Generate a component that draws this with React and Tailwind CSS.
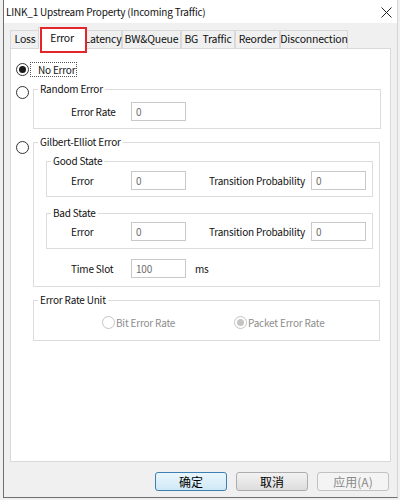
import React from 'react';

const Radio = ({ checked, disabled }) => (
    <span className={`w-[13px] h-[13px] shrink-0 rounded-full border flex items-center justify-center bg-white ${disabled ? 'border-[#c4c4c4]' : 'border-[#333333]'}`}>
        {checked && <span className={`w-[7px] h-[7px] rounded-full ${disabled ? 'bg-[#c4c4c4]' : 'bg-[#1a1a1a]'}`} />}
    </span>
);

const Field = ({ value }) => (
    <div className="w-[55px] h-[19px] shrink-0 border border-[#c9c9c9] bg-white text-[#6d6d6d] pl-[4px] leading-[17px]">
        {value}
    </div>
);

// fieldset keeps no padding so the legend stays at the left edge
const Group = ({ title, className = '', inner = '', children }) => (
    <fieldset className={`border border-[#dcdcdc] ${className}`}>
        <legend className="ml-[4px] px-[2px] leading-[16px]">{title}</legend>
        <div className={inner}>{children}</div>
    </fieldset>
);

const tabs = [
    { label: 'Loss', w: 'w-[30px]' },
    { label: 'Error', w: 'w-[48px]', active: true },
    { label: 'Latency', w: 'w-[38px]' },
    { label: 'BW&Queue', w: 'w-[59px]' },
    { label: 'BG\u00a0\u00a0Traffic', w: 'w-[54px]' },
    { label: 'Reorder', w: 'w-[45px]' },
    { label: 'Disconnection', w: 'w-[68px]' },
];

const Button = ({ children, focused, disabled }) => {
    let cls = 'border-[#acacac] bg-gradient-to-b from-[#f2f2f2] to-[#dddddd] text-black';
    if (focused) cls = 'border-[#3c7fb1] bg-gradient-to-b from-[#eaf6fd] to-[#d0e9f7] text-black';
    if (disabled) cls = 'border-[#c2c2c2] bg-[#f4f4f4] text-[#8a8a8a]';
    return (
        <div className={`w-[72px] h-[19px] rounded-[3px] border flex items-center justify-center text-[12px] tracking-normal leading-none ${cls}`}>
            {children}
        </div>
    );
};

export default function App() {
    return (
        <div className="w-[400px] h-[500px] bg-[#f0f0f0] overflow-hidden pl-[3px] text-[10px] tracking-[-0.2px] text-[#111] font-['Noto_Sans_CJK_SC','Noto_Sans',sans-serif]">
            <div className="w-[395px] h-[498px] border-l border-b border-r border-l-[#6f6f6f] border-b-[#6f6f6f] border-r-[#d6d6d6] flex flex-col">
                {/* Title bar */}
                <div className="h-[23px] bg-white flex items-center justify-between pl-[2px] pr-[5px] shrink-0">
                    <span className="leading-none text-[10px]">LINK_1 Upstream Property (Incoming Traffic)</span>
                    <svg width="11" height="11" viewBox="0 0 11 11" className="mt-[1px]">
                        <path d="M0.5 0.5 L10.5 10.5 M10.5 0.5 L0.5 10.5" stroke="#222" strokeWidth="1" />
                    </svg>
                </div>

                {/* Body */}
                <div className="flex-1 flex flex-col pl-[6px] pr-[6px] pt-[4px]">
                    {/* Tabs */}
                    <div className="flex items-end h-[22px] relative z-10 text-[10.5px]">
                        {tabs.map(t =>
                            t.active ? (
                                <div key={t.label} className={`${t.w} -mx-[2px] h-[22px] bg-white border border-b-0 border-[#d9d9d9] relative flex justify-center pt-[2px]`}>
                                    <span className="leading-[16px]">{t.label}</span>
                                    <div className="absolute left-[1px] -top-[1px] w-[47px] h-[26px] border-2 border-[#e3262b]" />
                                </div>
                            ) : (
                                <div key={t.label} className={`${t.w} h-[18px] mb-px bg-[#f0f0f0] border border-b-0 border-[#d9d9d9] flex items-center justify-center whitespace-nowrap`}>
                                    <span className="leading-none">{t.label}</span>
                                </div>
                            )
                        )}
                    </div>

                    {/* Panel */}
                    <div className="h-[414px] -mt-px bg-white border border-[#d9d9d9] pl-[5px] pr-[9px] pt-[13px]">
                        <div className="flex items-center h-[15px]">
                            <Radio checked />
                            <span className="ml-[1px] border border-dotted border-[#555] pl-[7px] pr-[1px] leading-[13px] h-[15px]">No Error</span>
                        </div>

                        <div className="flex mt-[4px]">
                            <div className="w-[17px] pt-[5px]"><Radio /></div>
                            <Group title="Random Error" className="flex-1" inner="pl-[37px] pt-[5px] pb-[7px]">
                                <div className="flex items-center">
                                    <span className="w-[60px]">Error Rate</span>
                                    <Field value="0" />
                                </div>
                            </Group>
                        </div>

                        <div className="flex mt-[5px]">
                            <div className="w-[17px] pt-[7px]"><Radio /></div>
                            <Group title="Gilbert-Elliot Error" className="flex-1 mr-[1px]" inner="pt-[3px] pb-[8px]">
                                <Group title="Good State" className="ml-[12px] mr-[6px]" inner="pl-[24px] pt-[2px] pb-[6px]">
                                    <div className="flex items-center whitespace-nowrap">
                                        <span className="w-[60px]">Error</span>
                                        <Field value="0" />
                                        <span className="ml-[23px] w-[102px]">Transition Probability</span>
                                        <Field value="0" />
                                    </div>
                                </Group>
                                <Group title="Bad State" className="ml-[12px] mr-[6px] mt-[8px]" inner="pl-[24px] pt-[1px] pb-[7px]">
                                    <div className="flex items-center whitespace-nowrap">
                                        <span className="w-[60px]">Error</span>
                                        <Field value="0" />
                                        <span className="ml-[23px] w-[102px]">Transition Probability</span>
                                        <Field value="0" />
                                    </div>
                                </Group>
                                <div className="flex items-center mt-[10px] pl-[37px]">
                                    <span className="w-[60px]">Time Slot</span>
                                    <Field value="100" />
                                    <span className="ml-[9px]">ms</span>
                                </div>
                            </Group>
                        </div>

                        <div className="flex mt-[5px]">
                            <div className="w-[17px]" />
                            <Group title="Error Rate Unit" className="flex-1 mr-[1px]" inner="pt-[6px] pb-[10px] pl-[68px]">
                                <div className="flex items-center h-[16px] text-[#8d8d8d]">
                                    <div className="w-[132px] flex items-center gap-[1px]">
                                        <Radio disabled />
                                        <span>Bit Error Rate</span>
                                    </div>
                                    <div className="flex items-center gap-[1px]">
                                        <Radio disabled checked />
                                        <span>Packet Error Rate</span>
                                    </div>
                                </div>
                            </Group>
                        </div>
                    </div>

                    {/* Buttons */}
                    <div className="flex justify-end gap-[9px] mt-[10px] pr-[2px]">
                        <Button focused>确定</Button>
                        <Button>取消</Button>
                        <Button disabled>应用(A)</Button>
                    </div>
                </div>
            </div>
        </div>
    );
}
